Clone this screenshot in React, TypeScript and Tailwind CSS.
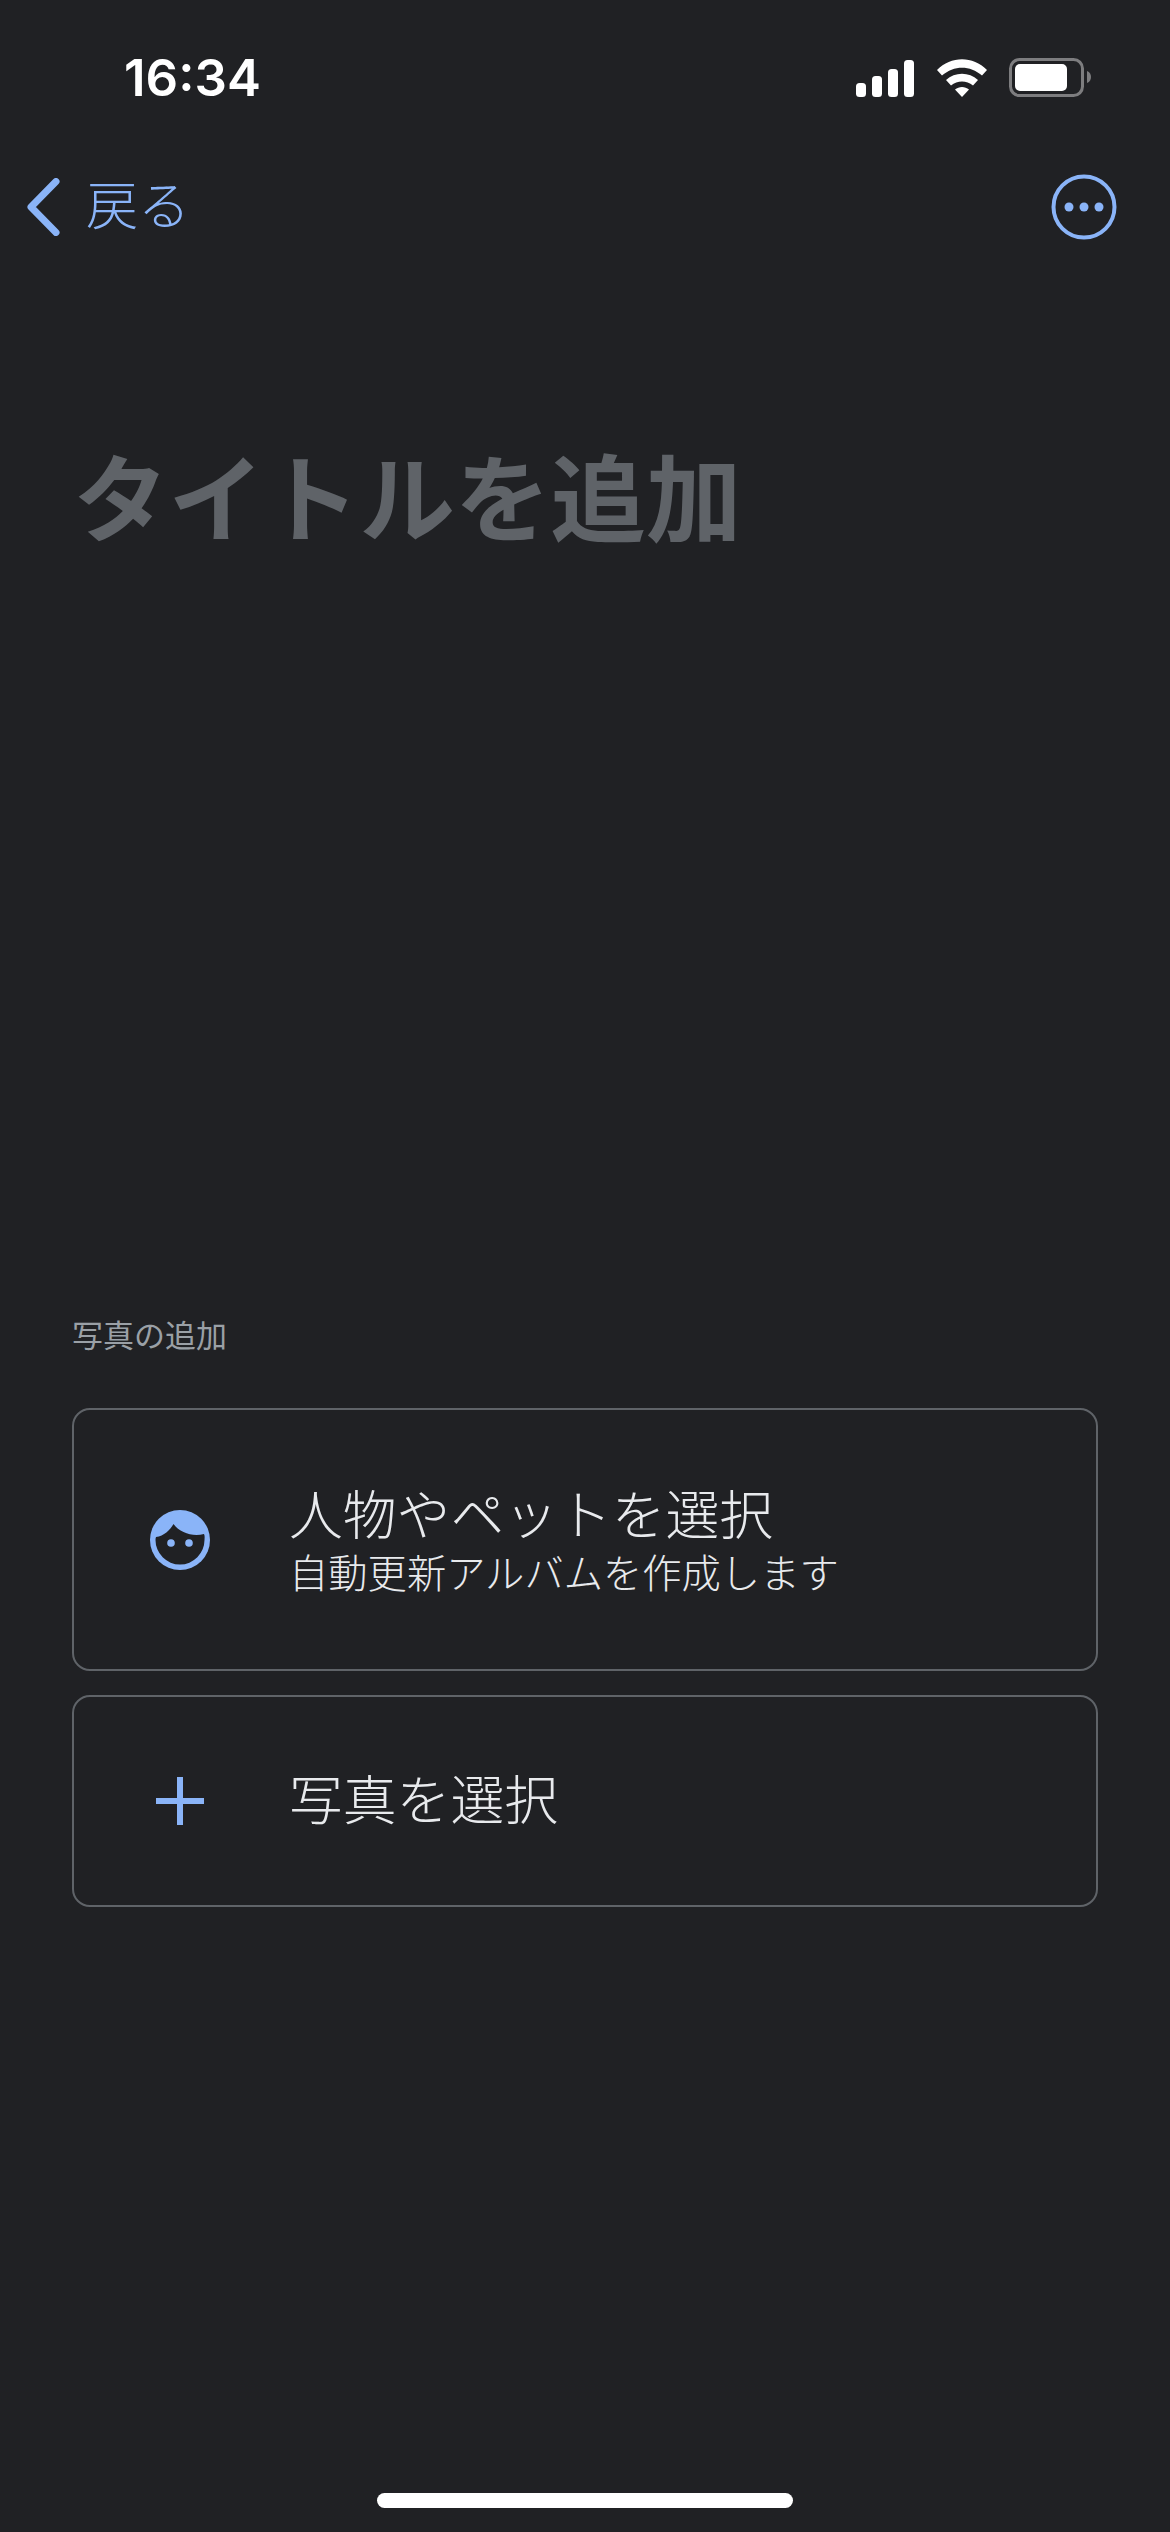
const cjk = "font-['Noto_Sans_CJK_JP','Noto_Sans',sans-serif]"

function StatusBar() {
  return (
    <div className="flex h-[150px] items-center justify-between pl-[124px] pr-[79px] pt-[5px]">
      <span className="font-['Inter',sans-serif] text-[51px] leading-none font-semibold text-white">16:34</span>
      <div className="flex items-center">
        <svg width="58" height="38" viewBox="0 0 58 38" fill="#fff" className="mr-[23px]">
          <rect x="0" y="24" width="10" height="14" rx="3.5" />
          <rect x="16" y="17" width="10" height="21" rx="3.5" />
          <rect x="32" y="10" width="10" height="28" rx="3.5" />
          <rect x="48" y="1" width="10" height="37" rx="3.5" />
        </svg>
        <svg width="50" height="38" viewBox="0 0 50 38" fill="#fff" className="mr-[22px]">
          <path d="M0 11 C14 -3.5 36 -3.5 50 11 L45 16.5 C33 6 17 6 5 16.5 Z" />
          <path d="M9 21 C18 12.5 32 12.5 41 21 L36 26.5 C29.5 21 20.5 21 14 26.5 Z" />
          <path d="M18 30.5 C22 27 28 27 32 30.5 L25 38 Z" />
        </svg>
        <svg width="82" height="40" viewBox="0 0 82 40">
          <rect x="1.5" y="1.5" width="72" height="36" rx="9" fill="none" stroke="#7d7d7f" strokeWidth="3" />
          <rect x="6" y="6" width="52" height="27" rx="5" fill="#fff" />
          <path d="M78 13 C81 14 82 16.5 82 19 C82 21.5 81 24 78 25 Z" fill="#7d7d7f" />
        </svg>
      </div>
    </div>
  )
}

function NavBar() {
  return (
    <div className="flex h-[114px] items-center justify-between pl-[27px] pr-[53px]">
      <div className="flex items-center gap-[23px]">
        <svg width="36" height="58" viewBox="0 0 36 58" fill="none" stroke="#8ab4f8" strokeWidth="7" strokeLinecap="round" strokeLinejoin="round">
          <path d="M29 3.5 L4 29 L29 54.5" />
        </svg>
        <span className={`${cjk} mb-[8px] text-[52px] leading-none font-light text-[#8ab4f8]`}>戻る</span>
      </div>
      <svg width="66" height="66" viewBox="0 0 66 66" fill="#8ab4f8">
        <circle cx="33" cy="33" r="30.5" fill="none" stroke="#8ab4f8" strokeWidth="4" />
        <circle cx="18" cy="33" r="4.5" />
        <circle cx="33" cy="33" r="4.5" />
        <circle cx="48" cy="33" r="4.5" />
      </svg>
    </div>
  )
}

function FaceIcon() {
  return (
    <svg width="60" height="60" viewBox="0 0 60 60">
      <circle cx="30" cy="30" r="30" fill="#8ab4f8" />
      <path d="M6 27 C14 26 20 20 23.5 14 C30 23 43 27 54 24 C55 26 54.5 28 54.5 30 A24.5 24.5 0 0 1 5.5 30 C5.5 29 5.6 28 6 27 Z" fill="#202124" />
      <circle cx="21" cy="33" r="3.8" fill="#8ab4f8" />
      <circle cx="39" cy="33" r="3.8" fill="#8ab4f8" />
    </svg>
  )
}

function PlusIcon() {
  return (
    <svg width="48" height="48" viewBox="0 0 48 48" fill="#8ab4f8">
      <rect x="21" y="0" width="6" height="48" />
      <rect x="0" y="21" width="48" height="6" />
    </svg>
  )
}

export default function App() {
  return (
    <div className="flex h-[2532px] w-[1170px] flex-col overflow-hidden bg-[#202124]">
      <StatusBar />
      <NavBar />

      <h1 className={`${cjk} mt-[162px] pl-[73px] text-[95.5px] leading-[136px] font-bold text-[#5f6368]`}>タイトルを追加</h1>

      <p className={`${cjk} mt-[750px] pl-[72px] text-[31px] leading-[44px] text-[#9aa0a6]`}>写真の追加</p>

      <div className="mx-[72px] mt-[52px] flex flex-col gap-[24px]">
        <div className="flex h-[263px] items-center rounded-[18px] border-2 border-[#5f6368]">
          <div className="mr-[3px] flex w-[212px] shrink-0 justify-center">
            <FaceIcon />
          </div>
          <div className={`${cjk} mb-[3px] font-light text-[#e8eaed]`}>
            <div className="text-[53.8px] leading-[66px]">人物やペットを選択</div>
            <div className="text-[39.3px] leading-[52px]">自動更新アルバムを作成します</div>
          </div>
        </div>
        <div className="flex h-[212px] items-center rounded-[18px] border-2 border-[#5f6368]">
          <div className="mr-[3px] flex w-[212px] shrink-0 justify-center">
            <PlusIcon />
          </div>
          <div className={`${cjk} mb-[9px] text-[53.8px] leading-[64px] font-light text-[#e8eaed]`}>写真を選択</div>
        </div>
      </div>

      <div className="mt-auto flex justify-center pb-[24px]">
        <div className="h-[15px] w-[416px] rounded-full bg-white" />
      </div>
    </div>
  )
}
